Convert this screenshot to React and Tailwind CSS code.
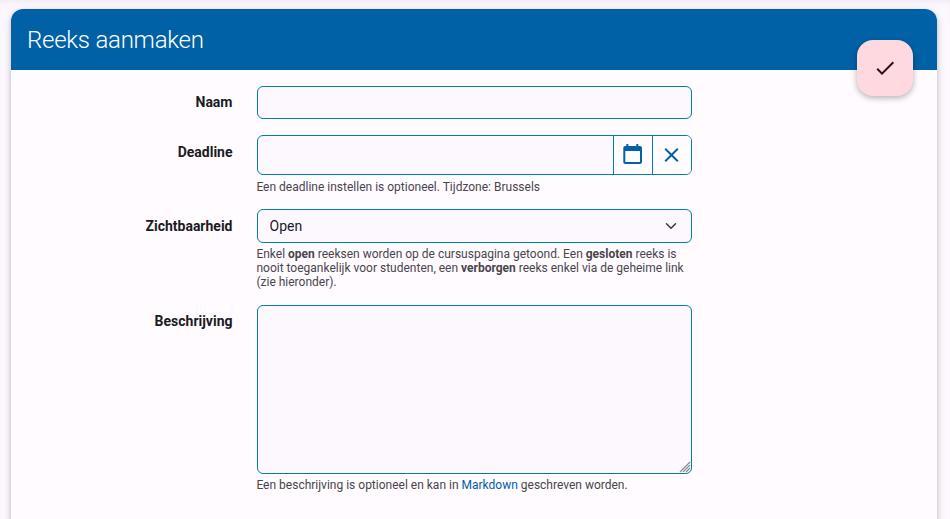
const field = 'block w-[435px] rounded-[6px] border border-[#0080a5] bg-[#fdf8fe]';
const help = 'text-[12px] leading-[14px] text-[#49454e] -ml-[0.6px]';

function Row({ label, labelTop, children, className }) {
  return (
    <div className={`flex ${className}`}>
      <label className={`w-[221.5px] shrink-0 text-right text-[14px] font-bold leading-5 text-[#1b1b1f] ${labelTop}`}>{label}</label>
      <div className="ml-[24.5px] w-[435px] shrink-0">{children}</div>
    </div>
  );
}

export default function App() {
  return (
    <div className="h-[519px] overflow-hidden bg-[#fdf8fe] px-[11px] pt-[9px] font-[Roboto,sans-serif] shadow-[inset_0_5px_6px_-3px_rgba(0,0,0,0.06)]">
      <div className="relative h-[560px] w-[926px] rounded-xl bg-[#fffbff] shadow-[0_2px_4px_rgba(0,0,0,0.16),0_3px_10px_rgba(0,0,0,0.14)]">
        <header className="flex h-[61px] items-center rounded-t-xl bg-[#0061a6] px-4">
          <h1 className="text-[24px] font-light leading-8 tracking-[-0.24px] text-white">Reeks aanmaken</h1>
        </header>
        <button className="absolute right-6 top-[31px] flex size-14 items-center justify-center rounded-2xl bg-[#ffd9e0] text-[#31101d] shadow-[0_2px_6px_rgba(0,0,0,0.3)]">
          <svg viewBox="0 0 24 24" className="size-6" fill="currentColor"><path d="M21 7L9 19L3.5 13.5L4.91 12.09L9 16.17L19.59 5.59L21 7Z" /></svg>
        </button>
        <form className="pt-4">
          <Row label="Naam" labelTop="pt-[6px]" className="h-[49px]">
            <input className={`${field} h-[33px]`} />
          </Row>
          <Row label="Deadline" labelTop="pt-[7px]" className="h-[74px]">
            <div className={`${field} flex h-10 overflow-hidden text-[#0061a6]`}>
              <div className="flex-1" />
              <div className="flex w-[39px] items-center justify-center border-l border-[#0080a5] bg-[#fffbff]">
                <svg viewBox="-0.3 0 24 24" className="mr-0.5 size-6" fill="currentColor"><path d="M19.7 3H18V1H16V3H8V1H6V3H5C3.89 3 3 3.9 3 5V19C3 20.1 3.89 21 5 21H19.7C20.81 21 21.7 20.1 21.7 19V5C21.7 3.9 20.81 3 19.7 3M19.7 19H5V8H19.7V19Z" /></svg>
              </div>
              <div className="flex w-[39px] items-center justify-center border-l border-[#0080a5] bg-[#fffbff]">
                <svg viewBox="-0.5 0 24 24" className="mr-0.5 size-6" fill="currentColor"><path d="M19 6.41L17.59 5L12 10.59L6.41 5L5 6.41L10.59 12L5 17.59L6.41 19L12 13.41L17.59 19L19 17.59L13.41 12L19 6.41Z" /></svg>
              </div>
            </div>
            <p className={`mt-[5px] ${help}`}>Een deadline instellen is optioneel. Tijdzone: Brussels</p>
          </Row>
          <Row label="Zichtbaarheid" labelTop="pt-[7px]" className="h-24">
            <div className={`${field} flex h-[34px] items-center justify-between pl-[11.5px] pr-[14px] text-[14px] text-[#1b1b1f]`}>
              <span>Open</span>
              <svg viewBox="0 0 16 16" className="size-3" fill="none" stroke="#343a40" strokeWidth="2" strokeLinecap="round" strokeLinejoin="round"><path d="m2 5 6 6 6-6" /></svg>
            </div>
            <p className={`mt-1 whitespace-nowrap ${help}`}>
              Enkel <b>open</b> reeksen worden op de cursuspagina getoond. Een <b>gesloten</b> reeks is<br />
              nooit toegankelijk voor studenten, een <b>verborgen</b> reeks enkel via de geheime link<br />
              (zie hieronder).
            </p>
          </Row>
          <Row label="Beschrijving" labelTop="pt-[6px]" className="">
            <div className="relative">
              <textarea className={`${field} h-[169px] resize-none`} />
              <svg viewBox="0 0 12 12" className="pointer-events-none absolute bottom-px right-px size-3" fill="none" stroke="#8a878d" strokeWidth="1.1"><path d="M1 11 11 1M4 11 11 4M7 11 11 7" /></svg>
            </div>
            <p className={`mt-1 ${help}`}>Een beschrijving is optioneel en kan in <a className="text-[#0061a6]">Markdown</a> geschreven worden.</p>
          </Row>
        </form>
      </div>
    </div>
  );
}
